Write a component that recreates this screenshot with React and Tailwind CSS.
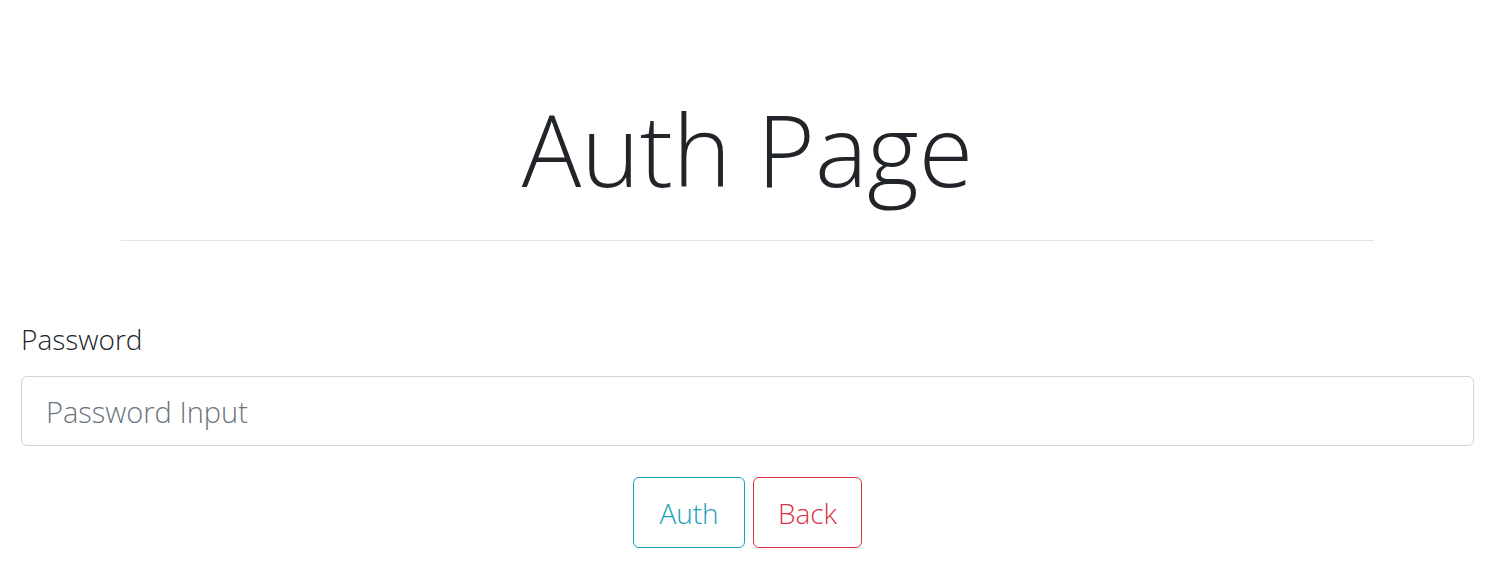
import React from 'react';

export default function App() {
  return (
    <div className="min-h-screen bg-white pl-[21px] pr-[16px] font-['Open_Sans',sans-serif] text-[#212529]">
      <h1 className="pt-[90px] text-center text-[99px] font-light leading-[1.2]">Auth Page</h1>
      <hr className="mx-[100px] mt-[31px] border-0 border-t border-[#e5e5e5]" />

      <div className="mt-[77px]">
        <label className="block text-[28px] font-light leading-[1.5]">Password</label>
        <input
          type="password"
          placeholder="Password Input"
          className="mt-[16px] block h-[70px] w-full rounded-[6px] border border-[#ced4da] bg-white px-[24px] pt-[2px] text-[29px] font-light placeholder:text-[#6c757d] focus:outline-none"
        />
      </div>

      <div className="mt-[31px] flex justify-center gap-[8px]">
        <button className="h-[71px] w-[112px] rounded-[6px] border border-[#17a2b8] pt-[2px] text-[28px] font-light text-[#17a2b8]">
          Auth
        </button>
        <button className="h-[71px] w-[109px] rounded-[6px] border border-[#dc3545] pt-[2px] text-[28px] font-light text-[#dc3545]">
          Back
        </button>
      </div>
    </div>
  );
}
